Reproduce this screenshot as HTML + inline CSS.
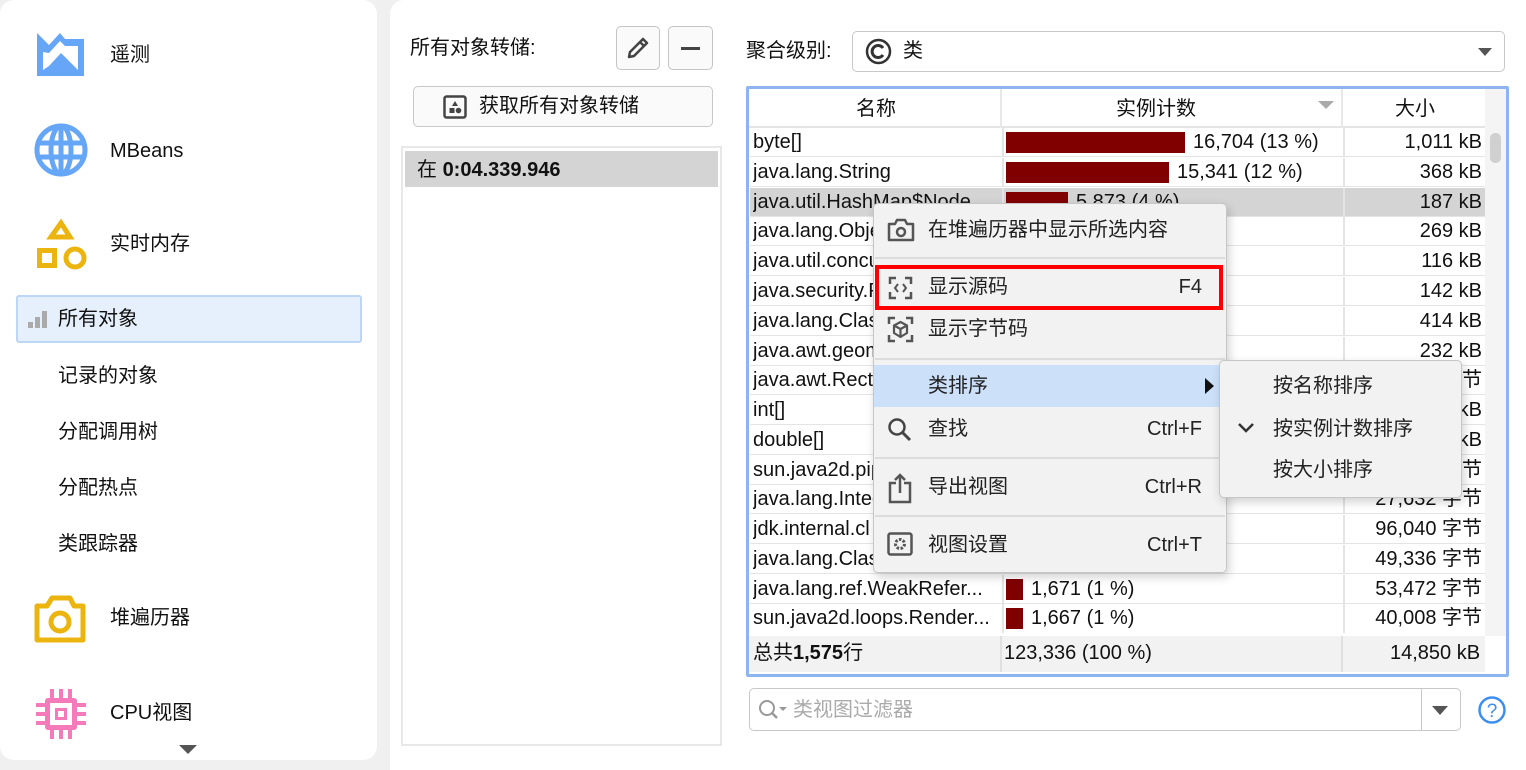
<!DOCTYPE html>
<html><head><meta charset="utf-8"><style>
*{box-sizing:border-box;margin:0;padding:0}
body{width:1526px;height:763px;background:#f0f0f0;position:relative;overflow:hidden;font-family:"Liberation Sans","Noto Sans CJK SC",sans-serif;font-size:20px;color:#111}
.a{position:absolute}
.t{position:absolute;white-space:nowrap;line-height:1}
.row{position:absolute;left:750px;width:735px;height:29px;border-bottom:1px solid #e4e4e4;background:#fff;line-height:21px}
.row.sel{background:#d4d4d4}
.c1{position:absolute;left:3px;top:4px;white-space:nowrap;width:246px;overflow:hidden}
.c2{position:absolute;left:252px;top:0;height:29px;width:340px;border-left:2px solid #e4e4e4}
.c3{position:absolute;left:593px;top:0;height:29px;width:142px;border-left:2px solid #e4e4e4;text-align:right;padding-right:3px;padding-top:4px;white-space:nowrap}
.bar{position:absolute;left:2px;top:4px;height:21px;background:#800000}
.num{position:absolute;top:4px;white-space:nowrap}
.mi{position:absolute;left:928px;white-space:nowrap;font-size:20px;color:#222;line-height:20px}
.sc{position:absolute;right:324px;white-space:nowrap;font-size:20px;color:#222;line-height:20px}
.sep{position:absolute;left:875px;width:350px;height:2px;background:#dcdcdc}
</style></head><body>
<!-- left panel -->
<div class="a" style="left:0;top:0;width:377px;height:760px;background:#fff;border-radius:14px"></div>
<svg class="a" style="left:36px;top:32px" width="50" height="46" viewBox="0 0 50 46"><path d="M1 1 L13 13 L24 1 L29 7 L48 7 L48 44 L1 44 Z M7 20 L7 38 L13 34 L25 21 L42 38 L42 14 L29 14 L24 9 L13 21 Z" fill="#66a6f7" fill-rule="evenodd"/></svg>
<div class="t" style="left:110px;top:45px">遥测</div>
<svg class="a" style="left:34px;top:123px" width="54" height="54" viewBox="0 0 54 54"><g fill="none" stroke="#66a6f7" stroke-width="5"><circle cx="27" cy="27" r="24"/><ellipse cx="27" cy="27" rx="10" ry="24"/><line x1="4" y1="20" x2="50" y2="20"/><line x1="4" y1="34" x2="50" y2="34"/><line x1="27" y1="3" x2="27" y2="51"/></g></svg>
<div class="t" style="left:110px;top:141px">MBeans</div>
<svg class="a" style="left:36px;top:218px" width="52" height="52" viewBox="0 0 52 52"><g fill="none" stroke="#ecb40e" stroke-width="5"><path d="M25 5 L34 19 L15 19 Z"/><rect x="3.5" y="32.5" width="15" height="15"/><circle cx="39" cy="40" r="9"/></g></svg>
<div class="t" style="left:110px;top:234px">实时内存</div>
<div class="a" style="left:16px;top:295px;width:346px;height:48px;background:#e6f0fc;border:2px solid #bcd6f6;border-radius:3px"></div>
<svg class="a" style="left:28px;top:310px" width="20" height="20"><rect x="0" y="12" width="5" height="6" fill="#aaa"/><rect x="7" y="7" width="5" height="11" fill="#aaa"/><rect x="14" y="1" width="5" height="17" fill="#aaa"/></svg>
<div class="t" style="left:58px;top:309px">所有对象</div>
<div class="t" style="left:58px;top:366px">记录的对象</div>
<div class="t" style="left:58px;top:422px">分配调用树</div>
<div class="t" style="left:58px;top:478px">分配热点</div>
<div class="t" style="left:58px;top:534px">类跟踪器</div>
<svg class="a" style="left:33px;top:594px" width="55" height="50" viewBox="0 0 55 50"><g fill="none" stroke="#ecb40e" stroke-width="5"><path d="M4 12 L14 12 L19 4 L37 4 L41 12 L50 12 L50 46 L4 46 Z" stroke-linejoin="round"/><circle cx="27" cy="28" r="9"/></g></svg>
<div class="t" style="left:110px;top:608px">堆遍历器</div>
<svg class="a" style="left:36px;top:689px" width="50" height="50" viewBox="0 0 50 50"><g fill="#f47ab9"><rect x="9" y="9" width="32" height="32" rx="3"/><rect x="14" y="0" width="4" height="9"/><rect x="23" y="0" width="4" height="9"/><rect x="32" y="0" width="4" height="9"/><rect x="14" y="41" width="4" height="9"/><rect x="23" y="41" width="4" height="9"/><rect x="32" y="41" width="4" height="9"/><rect x="0" y="14" width="9" height="4"/><rect x="0" y="23" width="9" height="4"/><rect x="0" y="32" width="9" height="4"/><rect x="41" y="14" width="9" height="4"/><rect x="41" y="23" width="9" height="4"/><rect x="41" y="32" width="9" height="4"/></g><rect x="14" y="14" width="22" height="22" fill="#fff"/><rect x="19" y="19" width="12" height="12" fill="#f47ab9"/><rect x="22" y="22" width="6" height="6" fill="#fff"/></svg>
<div class="t" style="left:110px;top:703px">CPU视图</div>
<svg class="a" style="left:179px;top:745px" width="18" height="9"><path d="M0 0 L18 0 L9 9Z" fill="#555"/></svg>

<!-- main panel -->
<div class="a" style="left:390px;top:0;width:1140px;height:770px;background:#fff;border-radius:14px 0 0 0"></div>
<div class="t" style="left:410px;top:38px">所有对象转储:</div>
<div class="a" style="left:616px;top:26px;width:44px;height:44px;border:1px solid #c4c4c4;border-radius:5px;background:#fafafa"></div>
<svg class="a" style="left:625px;top:35px" width="26" height="26" viewBox="0 0 26 26"><path d="M4 22 L5 17 L18 4 L22 8 L9 21 Z M15 7 L19 11" fill="none" stroke="#444" stroke-width="2.5" stroke-linejoin="round"/></svg>
<div class="a" style="left:668px;top:26px;width:45px;height:44px;border:1px solid #c4c4c4;border-radius:5px;background:#fafafa"></div>
<div class="a" style="left:681px;top:47px;width:19px;height:3px;background:#444"></div>
<div class="a" style="left:413px;top:86px;width:300px;height:41px;border:1px solid #c8c8c8;border-radius:5px;background:#fafafa"></div>
<svg class="a" style="left:443px;top:95px" width="24" height="24" viewBox="0 0 24 24"><rect x="1.5" y="1.5" width="21" height="21" rx="2" fill="none" stroke="#444" stroke-width="2.5"/><path d="M12 6 L15 11 L9 11Z" fill="#444"/><rect x="6.5" y="13" width="5" height="5" fill="#444"/><circle cx="15.5" cy="15.5" r="2.8" fill="#444"/></svg>
<div class="t" style="left:479px;top:96px">获取所有对象转储</div>
<div class="a" style="left:401px;top:146px;width:321px;height:600px;border:2px solid #e8e8e8;background:#fff"></div>
<div class="a" style="left:405px;top:151px;width:313px;height:36px;background:#d4d4d4"></div>
<div class="t" style="left:417px;top:160px">在 <b>0:04.339.946</b></div>

<div class="t" style="left:746px;top:41px">聚合级别:</div>
<div class="a" style="left:852px;top:31px;width:653px;height:41px;border:1px solid #c8c8c8;border-radius:5px;background:#fff"></div>
<svg class="a" style="left:865px;top:38px" width="27" height="27" viewBox="0 0 27 27"><circle cx="13.5" cy="13.5" r="11.5" fill="none" stroke="#333" stroke-width="2.5"/><path d="M18 10 A6 6 0 1 0 18 17" fill="none" stroke="#333" stroke-width="3"/></svg>
<div class="t" style="left:903px;top:41px">类</div>
<svg class="a" style="left:1478px;top:48px" width="14" height="8"><path d="M0 0L14 0L7 8Z" fill="#555"/></svg>

<!-- table -->
<div class="a" style="left:746px;top:86px;width:763px;height:591px;border:3px solid #8db4ef;border-radius:2px;background:#fff"></div>
<div class="a" style="left:749px;top:89px;width:736px;height:39px;background:#fff;border-bottom:2px solid #e4e4e4"></div>
<div class="a" style="left:1000px;top:89px;width:2px;height:39px;background:#e8e8e8"></div>
<div class="a" style="left:1341px;top:89px;width:2px;height:39px;background:#e8e8e8"></div>
<div class="t" style="left:856px;top:99px">名称</div>
<div class="t" style="left:1116px;top:99px">实例计数</div>
<div class="t" style="left:1395px;top:99px">大小</div>
<svg class="a" style="left:1318px;top:101px" width="16" height="8"><path d="M0 0L16 0L8 8Z" fill="#aaa"/></svg>
<div class="a" style="left:1485px;top:89px;width:21px;height:547px;background:#f4f4f4"></div>
<div class="a" style="left:1490px;top:133px;width:11px;height:30px;background:#d0d0d0;border-radius:5px"></div>

<div class="row" style="top:128px"><div class="c1">byte[]</div><div class="c2"><div class="bar" style="width:179px"></div><div class="num" style="left:189px">16,704 (13 %)</div></div><div class="c3">1,011 kB</div></div>
<div class="row" style="top:158px"><div class="c1">java.lang.String</div><div class="c2"><div class="bar" style="width:163px"></div><div class="num" style="left:173px">15,341 (12 %)</div></div><div class="c3">368 kB</div></div>
<div class="row sel" style="top:188px"><div class="c1">java.util.HashMap$Node</div><div class="c2"><div class="bar" style="width:62px"></div><div class="num" style="left:72px">5,873 (4 %)</div></div><div class="c3">187 kB</div></div>
<div class="row" style="top:217px"><div class="c1">java.lang.Object[]</div><div class="c2"></div><div class="c3">269 kB</div></div>
<div class="row" style="top:247px"><div class="c1">java.util.concurrent</div><div class="c2"></div><div class="c3">116 kB</div></div>
<div class="row" style="top:277px"><div class="c1">java.security.Prov</div><div class="c2"></div><div class="c3">142 kB</div></div>
<div class="row" style="top:307px"><div class="c1">java.lang.Class</div><div class="c2"></div><div class="c3">414 kB</div></div>
<div class="row" style="top:337px"><div class="c1">java.awt.geom</div><div class="c2"></div><div class="c3">232 kB</div></div>
<div class="row" style="top:366px"><div class="c1">java.awt.Rectangle</div><div class="c2"></div><div class="c3">64,304 字节</div></div>
<div class="row" style="top:396px"><div class="c1">int[]</div><div class="c2"></div><div class="c3">172 kB</div></div>
<div class="row" style="top:426px"><div class="c1">double[]</div><div class="c2"></div><div class="c3">115 kB</div></div>
<div class="row" style="top:456px"><div class="c1">sun.java2d.pipe</div><div class="c2"></div><div class="c3">78,432 字节</div></div>
<div class="row" style="top:485px"><div class="c1">java.lang.Integer</div><div class="c2"></div><div class="c3">27,632 字节</div></div>
<div class="row" style="top:515px"><div class="c1">jdk.internal.cl</div><div class="c2"></div><div class="c3">96,040 字节</div></div>
<div class="row" style="top:545px"><div class="c1">java.lang.Class</div><div class="c2"></div><div class="c3">49,336 字节</div></div>
<div class="row" style="top:575px"><div class="c1">java.lang.ref.WeakRefer...</div><div class="c2"><div class="bar" style="width:17px"></div><div class="num" style="left:27px">1,671 (1 %)</div></div><div class="c3">53,472 字节</div></div>
<div class="row" style="top:604px;border-bottom:none"><div class="c1">sun.java2d.loops.Render...</div><div class="c2"><div class="bar" style="width:17px"></div><div class="num" style="left:27px">1,667 (1 %)</div></div><div class="c3">40,008 字节</div></div>
<div class="a" style="left:749px;top:634px;width:736px;height:3px;background:#fff"></div>
<div class="a" style="left:749px;top:636px;width:736px;height:36px;background:#f2f2f2"></div>
<div class="a" style="left:1000px;top:636px;width:2px;height:36px;background:#e0e0e0"></div>
<div class="a" style="left:1341px;top:636px;width:2px;height:36px;background:#e0e0e0"></div>
<div class="t" style="left:753px;top:643px">总共<b>1,575</b>行</div>
<div class="t" style="left:1004px;top:643px">123,336 (100 %)</div>
<div class="t" style="left:1390px;top:643px">14,850 kB</div>

<!-- filter -->
<div class="a" style="left:749px;top:688px;width:712px;height:43px;border:1px solid #c8c8c8;border-radius:5px;background:#fff"></div>
<div class="a" style="left:1421px;top:689px;width:1px;height:41px;background:#c8c8c8"></div>
<svg class="a" style="left:1432px;top:706px" width="16" height="9"><path d="M0 0L16 0L8 9Z" fill="#555"/></svg>
<svg class="a" style="left:757px;top:698px" width="34" height="24"><circle cx="10" cy="10" r="7" fill="none" stroke="#999" stroke-width="2"/><line x1="15" y1="15" x2="20" y2="20" stroke="#999" stroke-width="2.5"/><path d="M22 9 L30 9 L26 13Z" fill="#999"/></svg>
<div class="t" style="left:793px;top:700px;color:#aaa">类视图过滤器</div>
<svg class="a" style="left:1477px;top:695px" width="30" height="30"><circle cx="15" cy="15" r="12.5" fill="none" stroke="#3d8ef0" stroke-width="2.5"/><text x="15" y="22" text-anchor="middle" font-family="Liberation Sans" font-size="19" fill="#3d8ef0">?</text></svg>

<!-- context menu -->
<div class="a" style="left:873px;top:203px;width:354px;height:370px;background:#f2f2f2;border:1px solid #c6c6c6;border-radius:5px;box-shadow:2px 4px 10px rgba(0,0,0,.18)"></div>
<svg class="a" style="left:887px;top:218px" width="28" height="24" viewBox="0 0 28 24"><path d="M2 6 L8 6 L10 2 L18 2 L20 6 L26 6 L26 22 L2 22Z" fill="none" stroke="#555" stroke-width="2.5" stroke-linejoin="round"/><circle cx="14" cy="14" r="4" fill="none" stroke="#555" stroke-width="2.5"/></svg>
<div class="mi" style="top:220px">在堆遍历器中显示所选内容</div>
<div class="sep" style="top:257px"></div>
<div class="a" style="left:875px;top:265px;width:348px;height:45px;border:4px solid #f00"></div>
<svg class="a" style="left:888px;top:276px" width="25" height="24" viewBox="0 0 25 24"><path d="M2 8V2H8M17 2H23V8M23 16V22H17M8 22H2V16" fill="none" stroke="#555" stroke-width="2.5"/><path d="M10 8L7 12L10 16M15 8L18 12L15 16" fill="none" stroke="#555" stroke-width="2"/></svg>
<div class="mi" style="top:277px">显示源码</div>
<div class="sc" style="top:277px">F4</div>
<svg class="a" style="left:887px;top:316px" width="27" height="27" viewBox="0 0 27 27"><path d="M2 8V2H8M19 2H25V8M25 19V25H19M8 25H2V19" fill="none" stroke="#555" stroke-width="2.5"/><path d="M13.5 6L20 9.5V17L13.5 21L7 17V9.5Z M7 9.5L13.5 13L20 9.5 M13.5 13V21" fill="none" stroke="#555" stroke-width="2.2" stroke-linejoin="round"/></svg>
<div class="mi" style="top:319px">显示字节码</div>
<div class="sep" style="top:358px"></div>
<div class="a" style="left:874px;top:365px;width:352px;height:42px;background:#cce0fa"></div>
<div class="mi" style="top:376px">类排序</div>
<svg class="a" style="left:1205px;top:378px" width="9" height="16"><path d="M0 0L9 8L0 16Z" fill="#111"/></svg>
<svg class="a" style="left:887px;top:417px" width="26" height="26"><circle cx="10" cy="10" r="7.5" fill="none" stroke="#444" stroke-width="2.5"/><line x1="15.5" y1="15.5" x2="23" y2="23" stroke="#444" stroke-width="3"/></svg>
<div class="mi" style="top:419px">查找</div>
<div class="sc" style="top:419px">Ctrl+F</div>
<div class="sep" style="top:457px"></div>
<svg class="a" style="left:887px;top:472px" width="26" height="32" viewBox="0 0 26 32"><path d="M9 11H3V30H23V11H17" fill="none" stroke="#555" stroke-width="2.5"/><path d="M13 21V3M8 8L13 3L18 8" fill="none" stroke="#555" stroke-width="2.5"/></svg>
<div class="mi" style="top:477px">导出视图</div>
<div class="sc" style="top:477px">Ctrl+R</div>
<div class="sep" style="top:515px"></div>
<svg class="a" style="left:887px;top:532px" width="26" height="24" viewBox="0 0 26 24"><rect x="1.5" y="1.5" width="23" height="21" rx="2" fill="none" stroke="#555" stroke-width="2.5"/><circle cx="13" cy="12" r="4.5" fill="none" stroke="#555" stroke-width="3" stroke-dasharray="2.5 1.5"/></svg>
<div class="mi" style="top:535px">视图设置</div>
<div class="sc" style="top:535px">Ctrl+T</div>

<!-- submenu -->
<div class="a" style="left:1219px;top:360px;width:243px;height:138px;background:#f2f2f2;border:1px solid #c6c6c6;border-radius:5px;box-shadow:2px 4px 10px rgba(0,0,0,.18)"></div>
<div class="mi" style="left:1273px;top:376px">按名称排序</div>
<svg class="a" style="left:1238px;top:423px" width="16" height="11"><path d="M1 1L8 8L15 1" fill="none" stroke="#333" stroke-width="2.5"/></svg>
<div class="mi" style="left:1273px;top:419px">按实例计数排序</div>
<div class="mi" style="left:1273px;top:460px">按大小排序</div>
</body></html>
